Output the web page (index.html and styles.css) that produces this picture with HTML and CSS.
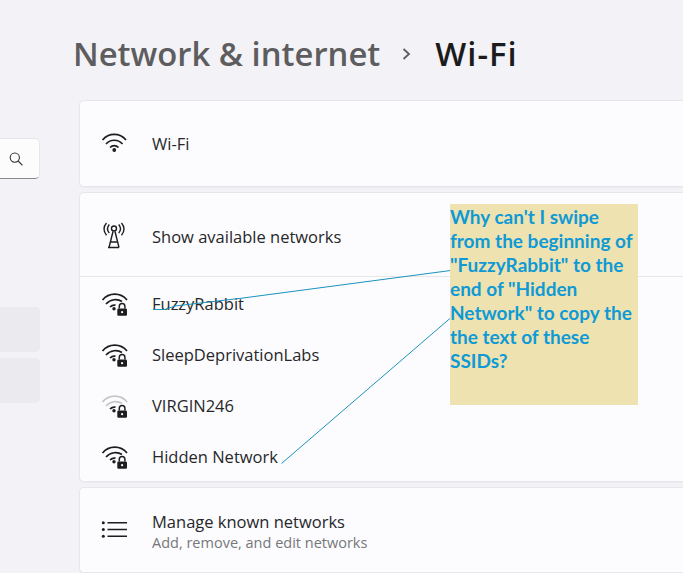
FILE: index.html
```html
<!DOCTYPE html>
<html lang="en">
<head>
<meta charset="utf-8">
<title>Wi-Fi</title>
<link rel="stylesheet" href="styles.css">
</head>
<body>
<div class="app">
  <aside class="sidebar">
    <div class="search">
      <svg class="search-icon" width="16" height="16" viewBox="0 0 16 16"><circle cx="6.800" cy="6.600" r="4.600"/><path d="M10.200 10l4.200 4.400"/></svg>
    </div>
    <div class="nav-pills">
      <div class="pill"></div>
      <div class="pill"></div>
    </div>
  </aside>
  <main class="main">
    <h1 class="crumbs"><span class="crumb-parent">Network &amp; internet</span>
      <svg class="chevron" width="12" height="14" viewBox="0 0 12 14"><path d="M2.500 2l5.500 5-5.500 5"/></svg>
      <span class="crumb-current">Wi-Fi</span></h1>
    <section class="card card-wifi">
      <div class="row row-head">
        <svg class="icon" width="28" height="24" viewBox="0 0 28 24"><g class="arc"><path d="M1.500 8C7.800 .5 18.700 .5 25 8"/><path d="M5 12C9.500 7 17 7 21.500 12"/><path d="M9 15.500c2.500-2.600 6-2.600 8.500 0"/></g><circle class="dot" cx="13.250" cy="18" r="1.900"/></svg>
        <span class="label">Wi-Fi</span>
      </div>
    </section>
    <section class="card card-list">
      <div class="row row-head row-show">
        <svg class="icon" width="28" height="28" viewBox="0 0 28 28"><g class="arc thin"><circle cx="13" cy="7.500" r="2.500"/><path d="M8.300 3.500c-2.200 2.600-2.200 6 0 8.600M17.700 3.500c2.200 2.600 2.200 6 0 8.600M5.500 2c-3.300 3.600-3.300 8.600 0 12.200M20.500 2c3.300 3.600 3.300 8.600 0 12.200"/><path d="M12 10.500L8 26.500M14 10.500l4 16M9.700 21h6.600M7 26.500h11"/></g></svg>
        <span class="label">Show available networks</span>
      </div>
      <div class="networks">
        <div class="row row-net">
          <svg class="icon" width="28" height="24" viewBox="0 0 28 24"><use href="#wifi-lock"/></svg>
          <span class="label">FuzzyRabbit</span>
        </div>
        <div class="row row-net">
          <svg class="icon" width="28" height="24" viewBox="0 0 28 24"><use href="#wifi-lock"/></svg>
          <span class="label">SleepDeprivationLabs</span>
        </div>
        <div class="row row-net">
          <svg class="icon" width="28" height="24" viewBox="0 0 28 24"><path class="arc weak" d="M1.500 8C7.800 .2 19.800 .2 26 8"/><path class="arc weak" d="M5 12C9.500 7 16.500 6.500 21 9.500"/><use href="#wifi-lock-low"/></svg>
          <span class="label">VIRGIN246</span>
        </div>
        <div class="row row-net">
          <svg class="icon" width="28" height="24" viewBox="0 0 28 24"><use href="#wifi-lock"/></svg>
          <span class="label">Hidden Network</span>
        </div>
      </div>
    </section>
    <section class="card card-manage">
      <div class="row row-head">
        <svg class="icon" width="28" height="20" viewBox="0 0 28 20"><g class="dot"><circle cx="2.300" cy="2.800" r="1.500"/><circle cx="2.300" cy="9.500" r="1.500"/><circle cx="2.300" cy="16.200" r="1.500"/></g><path class="arc thin" d="M6.500 2.800H26M6.500 9.500H26M6.500 16.200H26"/></svg>
        <div class="stack">
          <span class="label">Manage known networks</span>
          <span class="sublabel">Add, remove, and edit networks</span>
        </div>
      </div>
    </section>
  </main>
</div>

<svg class="defs" width="0" height="0">
  <defs>
    <g id="wifi-lock-low">
      <path class="arc" d="M9 15c1.600-1.600 3.500-2.200 5.500-1.800"/>
      <circle class="dot" cx="13" cy="16.800" r="1.700"/>
      <rect class="dot" x="16.300" y="16.500" width="9.700" height="7.300" rx="1.200"/>
      <path class="arc shackle" d="M18.300 16.500v-2.300a2.800 2.800 0 0 1 5.600 0v2.300"/>
      <circle class="hole" cx="21.100" cy="20.200" r="1.100"/>
    </g>
    <g id="wifi-lock">
      <path class="arc" d="M1.500 8C7.800 .2 19.800 .2 26 8"/>
      <path class="arc" d="M5 12C9.500 7 16.500 6.500 21 9.500"/>
      <use href="#wifi-lock-low"/>
    </g>
  </defs>
</svg>

<svg class="leader-lines" width="683" height="573" viewBox="0 0 683 573">
  <path d="M450.500 270.500L243 298 175 306 165 309.500 153 309.500"/>
  <path d="M450.500 318L281.500 463.500"/>
</svg>

<aside class="note">Why can't I swipe from the beginning of "FuzzyRabbit" to the end of "Hidden Network" to copy the the text of these SSIDs?</aside>
</body>
</html>
```

FILE: styles.css
```css
* { box-sizing: border-box; }
html, body { margin: 0; height: 100%; overflow: hidden; }
body {
  background: #f3f2f6;
  color: #1c1c1e;
  font-family: "Open Sans", "Noto Sans", sans-serif;
  position: relative;
}
.app {
  display: flex;
  width: 683px;
  height: 573px;
  overflow: hidden;
}
.sidebar {
  flex: 0 0 40px;
  padding-top: 138px;
}
.search {
  height: 41px;
  background: #fcfcfd;
  border: 1px solid #e6e6e8;
  border-left: 0;
  border-bottom: 1.500px solid #8a8a8c;
  border-radius: 0 5px 5px 0;
  display: flex;
  align-items: center;
  justify-content: flex-end;
  padding-right: 15px;
}
.search-icon { fill: none; stroke: #333; stroke-width: 1.100; flex: none; }
.nav-pills {
  margin-top: 128px;
  display: flex;
  flex-direction: column;
  gap: 6px;
}
.pill {
  height: 45px;
  background: #ebeaee;
  border-radius: 0 5px 5px 0;
}
.main {
  flex: 0 0 660px;
  margin-left: 39px;
  display: flex;
  flex-direction: column;
}
.crumbs {
  margin: 0 0 0 -6px;
  height: 100px;
  display: flex;
  align-items: center;
  padding-top: 7px;
  font-size: 32.800px;
  font-weight: 600;
  white-space: nowrap;
}
.crumb-parent { color: #5d5d5f; }
.crumb-current { color: #1b1b1d; letter-spacing: 1px; }
.chevron {
  fill: none;
  stroke: #5d5d5f;
  stroke-width: 1.800;
  margin: 0 22px 0 21px;
}
.card {
  background: #fcfcfe;
  border: 1px solid #e7e7ea;
  border-right: 0;
  border-radius: 5px 0 0 5px;
  box-shadow: 0 1px 1px #ececef;
}
.card-wifi { height: 87px; }
.card-list { height: 290px; margin-top: 5px; }
.card-manage { height: 86px; margin-top: 5px; }
.row {
  display: flex;
  align-items: center;
  gap: 23px;
  padding-left: 21px;
}
.row-head { height: 100%; }
.row-show { height: 84px; border-bottom: 1px solid #e7e7ea; }
.row-show .label { margin-top: 4px; }
.row-net { height: 51px; }
.networks { padding-top: 1px; }
.icon { flex: none; overflow: visible; }
.arc { fill: none; stroke: #1d1d1f; stroke-width: 1.700; }
.arc.thin { stroke-width: 1.400; }
.arc.weak { stroke: #c5c5c7; }
.dot { fill: #1d1d1f; }
.shackle { stroke-width: 1.500; }
.hole { fill: #fcfcfe; }
.label { font-size: 16.500px; color: #27272a; white-space: nowrap; }
.stack { display: flex; flex-direction: column; padding-top: 2px; }
.stack .label { line-height: 22px; }
.sublabel { font-size: 14.500px; line-height: 19px; color: #77777a; white-space: nowrap; }
.defs { position: absolute; }
.leader-lines {
  position: absolute;
  left: 0;
  top: 0;
  fill: none;
  stroke: #1b93bc;
  stroke-width: 1;
  pointer-events: none;
}
.note {
  position: absolute;
  left: 450px;
  top: 204px;
  width: 188px;
  height: 201px;
  background: #eee2b0;
  color: #0f9ad6;
  font-family: "Lato", sans-serif;
  font-weight: 700;
  font-size: 19px;
  line-height: 24px;
  padding-top: 1px;
}
```
